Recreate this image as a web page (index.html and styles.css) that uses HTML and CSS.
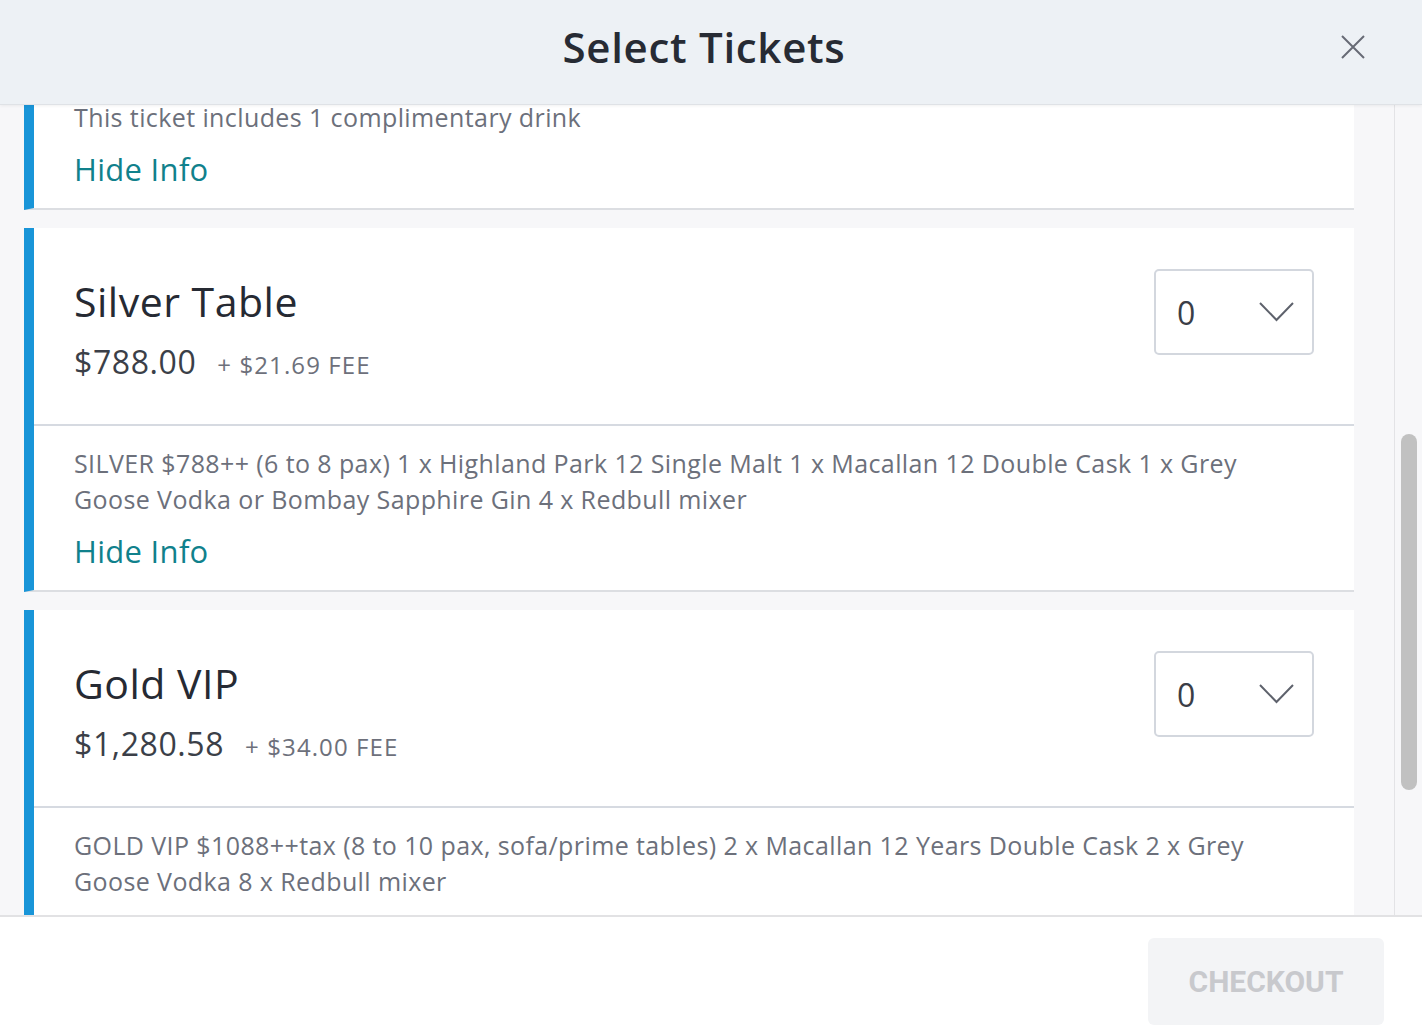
FILE: index.html
```html
<!DOCTYPE html>
<html lang="en">
<head>
    <meta charset="UTF-8">
    <meta name="viewport" content="width=device-width, initial-scale=1.0">
    <title>Select Tickets</title>
    <link rel="stylesheet" href="styles.css">
</head>
<body>
    <div class="modal">
        <header class="modal-header">
            <h1>Select Tickets</h1>
            <button class="close" aria-label="Close">
                <svg width="24" height="24" viewBox="0 0 24 24"><path d="M1 1 L23 23 M23 1 L1 23" stroke="#676b75" stroke-width="2" fill="none"/></svg>
            </button>
        </header>

        <div class="modal-body">
            <div class="tickets">
                <div class="ticket ticket-cut">
                    <div class="ticket-info">
                        <p>This ticket includes 1 complimentary drink</p>
                        <a href="#" class="toggle">Hide Info</a>
                    </div>
                </div>

                <div class="ticket">
                    <div class="ticket-head">
                        <div class="ticket-name">
                            <h2>Silver Table</h2>
                            <div class="price">$788.00 <span class="fee">+ $21.69 FEE</span></div>
                        </div>
                        <div class="qty">
                            <span>0</span>
                            <svg width="35" height="20" viewBox="0 0 35 20"><path d="M1 1 L17.5 18 L34 1" stroke="#5e626c" stroke-width="2" fill="none"/></svg>
                        </div>
                    </div>
                    <div class="ticket-info">
                        <p>SILVER $788++ (6 to 8 pax) 1 x Highland Park 12 Single Malt 1 x Macallan 12 Double Cask 1 x Grey Goose Vodka or Bombay Sapphire Gin 4 x Redbull mixer</p>
                        <a href="#" class="toggle">Hide Info</a>
                    </div>
                </div>

                <div class="ticket">
                    <div class="ticket-head">
                        <div class="ticket-name">
                            <h2>Gold VIP</h2>
                            <div class="price">$1,280.58 <span class="fee">+ $34.00 FEE</span></div>
                        </div>
                        <div class="qty">
                            <span>0</span>
                            <svg width="35" height="20" viewBox="0 0 35 20"><path d="M1 1 L17.5 18 L34 1" stroke="#5e626c" stroke-width="2" fill="none"/></svg>
                        </div>
                    </div>
                    <div class="ticket-info">
                        <p>GOLD VIP $1088++tax (8 to 10 pax, sofa/prime tables) 2 x Macallan 12 Years Double Cask 2 x Grey Goose Vodka 8 x Redbull mixer</p>
                        <a href="#" class="toggle">Hide Info</a>
                    </div>
                </div>
            </div>
            <div class="scroll-rail">
                <div class="scroll-thumb"></div>
            </div>
        </div>

        <footer class="modal-footer">
            <button class="checkout" disabled>CHECKOUT</button>
        </footer>
    </div>
</body>
</html>
```

FILE: styles.css
```css
body {
    margin: 0;
    font-family: "Open Sans", "Liberation Sans", sans-serif;
    background: #fff;
}
.modal {
    height: 1036px;
    display: flex;
    flex-direction: column;
    overflow: hidden;
}
.modal-header {
    height: 105px;
    flex: none;
    box-sizing: border-box;
    padding: 0 14px 12px 0;
    background: #edf1f5;
    border-bottom: 1px solid #dfe2e6;
    box-shadow: 0 1px 3px rgba(0,0,0,0.06);
    display: flex;
    align-items: center;
    justify-content: center;
    position: relative;
    z-index: 2;
}
.modal-header h1 {
    margin: 0;
    font-size: 42px;
    font-weight: 600;
    color: #272b34;
    letter-spacing: 0.7px;
}
.close {
    position: absolute;
    right: 57px;
    top: 35px;
    padding: 0;
    border: none;
    background: none;
    width: 24px;
    height: 24px;
    cursor: pointer;
}
.modal-body {
    flex: 1;
    display: flex;
    background: #f7f7f9;
    overflow: hidden;
}
.tickets {
    flex: 1;
    padding: 0 40px 0 24px;
}
.ticket {
    background: #fff;
    border-left: 10px solid #1995d8;
    border-bottom: 2px solid #dcdee2;
    margin-bottom: 18px;
}
.ticket-cut {
    margin-top: -25px;
}
.ticket-head {
    display: flex;
    justify-content: space-between;
    align-items: flex-start;
    padding: 40px 40px 39px 40px;
    border-bottom: 2px solid #d6dae1;
}
.ticket-name h2 {
    margin: 8px 0 0;
    font-size: 41px;
    font-weight: 400;
    line-height: 50px;
    color: #262a33;
    letter-spacing: 0.5px;
}
.price {
    margin-top: 16px;
    font-size: 32px;
    line-height: 40px;
    color: #3b3f48;
    letter-spacing: 0.6px;
}
.fee {
    margin-left: 12px;
    font-size: 24px;
    color: #6d707b;
    letter-spacing: 1.1px;
}
.qty {
    width: 117px;
    height: 82px;
    margin-top: 1px;
    border: 2px solid #d3d7de;
    border-radius: 5px;
    display: flex;
    align-items: center;
    justify-content: space-between;
    padding: 0 18px 0 21px;
}
.qty span {
    font-size: 32px;
    color: #3a3e47;
}
.ticket-info {
    padding: 19px 40px 19px 40px;
}
.ticket-info p {
    margin: 0;
    font-size: 25px;
    line-height: 36px;
    color: #6c707b;
    letter-spacing: 0.4px;
}
.toggle {
    display: block;
    margin-top: 14px;
    font-size: 31px;
    line-height: 40px;
    color: #10818c;
    text-decoration: none;
    letter-spacing: 0.3px;
}
.scroll-rail {
    width: 27px;
    flex: none;
    border-left: 1px solid #e3e3e6;
    padding-top: 329px;
}
.scroll-thumb {
    width: 16px;
    height: 356px;
    margin-left: 6px;
    background: #c1c1c1;
    border-radius: 8px;
}
.modal-footer {
    height: 121px;
    flex: none;
    border-top: 2px solid #e2e2e4;
    display: flex;
    justify-content: flex-end;
    align-items: flex-start;
    padding: 21px 38px 0 0;
    box-sizing: border-box;
    background: #fff;
}
.checkout {
    width: 236px;
    height: 87px;
    border: none;
    border-radius: 6px;
    background: #f3f4f6;
    color: #c8c9cd;
    font-family: Roboto, "Liberation Sans", sans-serif;
    font-size: 30px;
    font-weight: 700;
}
```
